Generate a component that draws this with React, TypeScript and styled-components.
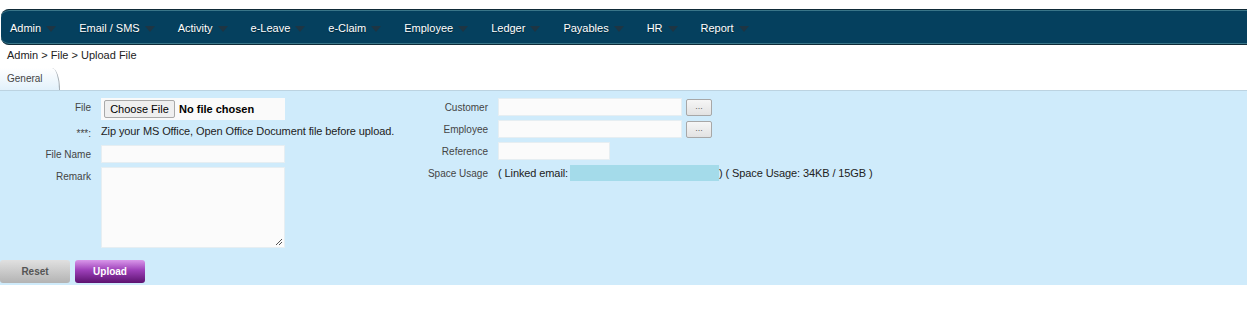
import React from "react";
import styled, { createGlobalStyle } from "styled-components";

const GlobalStyle = createGlobalStyle`
  body {
    margin: 0;
    background: #fff;
    font-family: "Liberation Sans", Arial, sans-serif;
  }
`;

const Page = styled.div`
  width: 1247px;
  height: 313px;
  overflow: hidden;
`;

const NavBar = styled.nav`
  display: flex;
  align-items: center;
  margin: 9px 0 0 1px;
  height: 34px;
  background: #05405e;
  border-top: 1px solid #0f2a37;
  border-bottom: 1px solid #0f2a37;
  box-shadow: inset 0 1px 0 #3a7689, inset 0 -1px 0 #3a7689;
  border-radius: 8px 0 0 8px;
`;

const NavItem = styled.div`
  display: flex;
  align-items: center;
  padding: 2px 14px 0 9px;
  color: #fff;
  font-size: 11px;
  text-shadow: 0 1px 1px rgba(0, 0, 0, 0.45);
  white-space: nowrap;
`;

const Caret = styled.svg`
  display: block;
  margin-left: 5px;
  margin-top: 1px;
`;

const Breadcrumb = styled.div`
  height: 20px;
  padding: 3px 0 0 7px;
  font-size: 11px;
  line-height: 14px;
  color: #222;
`;

const TabStrip = styled.div`
  display: flex;
  height: 22px;
`;

const Tab = styled.div`
  width: 52px;
  padding-left: 7px;
  font-size: 10px;
  line-height: 22px;
  color: #444;
  background: linear-gradient(to bottom, #ffffff, #e2f1fb);
  border-right: 1px solid #a4acb2;
  border-top-right-radius: 8px 22px;
`;

const Panel = styled.div`
  background: #cfebfb;
  border-top: 1px solid #bcd3e1;
  padding: 7px 0 2px;
`;

const FormRow = styled.div`
  display: flex;
`;

const FieldGrid = styled.div<{ $labelWidth: number; $width?: number }>`
  display: grid;
  grid-template-columns: ${(p) => p.$labelWidth}px auto;
  column-gap: 10px;
  row-gap: 4px;
  align-content: start;
  ${(p) => (p.$width ? `width: ${p.$width}px;` : "")}
`;

const Label = styled.div`
  text-align: right;
  font-size: 10px;
  line-height: 14px;
  padding-top: 3px;
  color: #444;
  white-space: nowrap;
`;

const FilePicker = styled.div`
  display: flex;
  align-items: center;
  gap: 4px;
  width: 181px;
  height: 22px;
  padding-left: 3px;
  background: #fafafa;
`;

const ChooseButton = styled.button`
  width: 71px;
  height: 18px;
  padding: 0;
  font-family: "Liberation Sans", Arial, sans-serif;
  font-size: 11px;
  color: #000;
  background: #efefef;
  border: 1px solid #a9a9a9;
  border-radius: 2px;
`;

const FileStatus = styled.span`
  font-size: 11px;
  font-weight: bold;
  color: #000;
`;

const Note = styled.div`
  font-size: 11px;
  line-height: 14px;
  letter-spacing: -0.1px;
  padding-bottom: 3px;
  color: #222;
  white-space: nowrap;
`;

const TextInput = styled.div<{ $width: number }>`
  width: ${(p) => p.$width}px;
  height: 16px;
  background: #fbfbfb;
  border: 1px solid #e6eef2;
`;

const TextArea = styled.div`
  position: relative;
  width: 182px;
  height: 79px;
  background: #fbfbfb;
  border: 1px solid #e6eef2;
`;

const Grip = styled.svg`
  position: absolute;
  right: 1px;
  bottom: 1px;
`;

const InputGroup = styled.div`
  display: flex;
  gap: 4px;
  align-items: center;
`;

const LookupButton = styled.div`
  width: 24px;
  height: 15px;
  background: linear-gradient(to bottom, #f6f6f6, #e2e2e2);
  border: 1px solid #a7a7a7;
  border-radius: 2px;
  font-size: 9px;
  line-height: 13px;
  text-align: center;
  color: #666;
`;

const UsageLine = styled.div`
  display: flex;
  align-items: center;
  height: 16px;
  margin-top: 1px;
  font-size: 11px;
  letter-spacing: -0.1px;
  color: #222;
  white-space: nowrap;
`;

const Masked = styled.span`
  display: inline-block;
  width: 149px;
  height: 16px;
  margin-left: 2px;
  background: #a4dbea;
`;

const ButtonRow = styled.div`
  display: flex;
  gap: 5px;
  margin-top: 12px;
`;

const ActionButton = styled.div<{ $variant: "reset" | "upload" }>`
  width: 70px;
  height: 23px;
  border-radius: 3px;
  font-size: 10px;
  font-weight: bold;
  line-height: 23px;
  text-align: center;
  color: ${(p) => (p.$variant === "reset" ? "#555" : "#fff")};
  background: ${(p) =>
    p.$variant === "reset"
      ? "linear-gradient(to bottom, #e0e0e0, #b3b3b3)"
      : "linear-gradient(to bottom, #d997ea 0%, #9c3fb8 45%, #5c126f 100%)"};
`;

const menu = [
  "Admin",
  "Email / SMS",
  "Activity",
  "e-Leave",
  "e-Claim",
  "Employee",
  "Ledger",
  "Payables",
  "HR",
  "Report",
];

export default function App() {
  return (
    <Page>
      <GlobalStyle />
      <NavBar>
        {menu.map((m) => (
          <NavItem key={m}>
            {m}
            <Caret width="10" height="6" viewBox="0 0 10 6">
              <path d="M0 0 H10 L5 6 Z" fill="#1e3543" />
            </Caret>
          </NavItem>
        ))}
      </NavBar>
      <Breadcrumb>Admin &gt; File &gt; Upload File</Breadcrumb>
      <TabStrip>
        <Tab>General</Tab>
      </TabStrip>
      <Panel>
        <FormRow>
          <FieldGrid $labelWidth={91} $width={400}>
            <Label>File</Label>
            <FilePicker>
              <ChooseButton>Choose File</ChooseButton>
              <FileStatus>No file chosen</FileStatus>
            </FilePicker>
            <Label>***:</Label>
            <Note>Zip your MS Office, Open Office Document file before upload.</Note>
            <Label>File Name</Label>
            <TextInput $width={182} />
            <Label>Remark</Label>
            <TextArea>
              <Grip width="9" height="9" viewBox="0 0 9 9">
                <path d="M8 2 L2 8 M8 5 L5 8" stroke="#555" strokeWidth="1" />
              </Grip>
            </TextArea>
          </FieldGrid>
          <FieldGrid $labelWidth={88}>
            <Label>Customer</Label>
            <InputGroup>
              <TextInput $width={182} />
              <LookupButton>...</LookupButton>
            </InputGroup>
            <Label>Employee</Label>
            <InputGroup>
              <TextInput $width={182} />
              <LookupButton>...</LookupButton>
            </InputGroup>
            <Label>Reference</Label>
            <TextInput $width={110} />
            <Label>Space Usage</Label>
            <UsageLine>
              ( Linked email:
              <Masked />) ( Space Usage: 34KB / 15GB )
            </UsageLine>
          </FieldGrid>
        </FormRow>
        <ButtonRow>
          <ActionButton $variant="reset">Reset</ActionButton>
          <ActionButton $variant="upload">Upload</ActionButton>
        </ButtonRow>
      </Panel>
    </Page>
  );
}
